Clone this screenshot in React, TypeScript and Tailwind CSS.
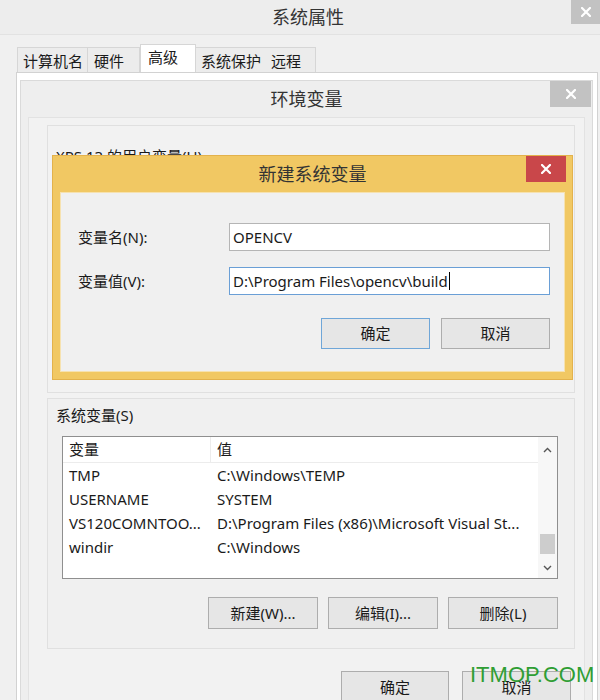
import React from "react";

const font = "font-['Noto_Sans','Noto_Sans_CJK_SC',sans-serif]";

function CloseX({ size = 10 }: { size?: number }) {
  return (
    <svg width={size} height={size} viewBox="0 0 10 10">
      <path d="M1 1L9 9M9 1L1 9" stroke="white" strokeWidth="2.2" strokeLinecap="square" />
    </svg>
  );
}

function Chevron({ up }: { up?: boolean }) {
  return (
    <svg width="9" height="6" viewBox="0 0 9 6">
      <path d={up ? "M1 5L4.5 1.5L8 5" : "M1 1L4.5 4.5L8 1"} stroke="#555" strokeWidth="1.4" fill="none" />
    </svg>
  );
}

function Btn({ label, w, focus }: { label: string; w: string; focus?: boolean }) {
  return (
    <div
      className={`${w} h-full flex items-center justify-center text-[15px] text-[#1a1a1a] bg-[#e6e6e6] border ${
        focus ? "border-[#6fa6d8]" : "border-[#adadad]"
      }`}
    >
      {label}
    </div>
  );
}

const tabs = [
  { name: "计算机名", w: "w-[71px]", pl: "pl-[5px]" },
  { name: "硬件", w: "w-[52px]", pl: "pl-[6px]" },
  { name: "高级", w: "w-[56px]", pl: "pl-[7px]", active: true },
  { name: "系统保护", w: "w-[69px]", pl: "pl-[5px]" },
  { name: "远程", w: "w-[51px]", pl: "pl-[6px]" },
];

const rows = [
  ["TMP", "C:\\Windows\\TEMP"],
  ["USERNAME", "SYSTEM"],
  ["VS120COMNTOO...", "D:\\Program Files (x86)\\Microsoft Visual St..."],
  ["windir", "C:\\Windows"],
];

export default function App() {
  return (
    <div className={`relative w-[600px] h-[700px] overflow-hidden bg-[#f0f0f0] ${font} text-[#1a1a1a]`}>
      {/* 系统属性 title bar */}
      <div className="relative h-[35px] bg-[#ededed] border-b border-[#e2e2e2] flex items-center justify-center pl-[16px] text-[18px] text-[#333]">
        系统属性
        <div className="absolute right-0 top-0 w-[29px] h-[24px] bg-[#c2c2c2] flex items-center justify-center">
          <CloseX />
        </div>
      </div>

      {/* tabs */}
      <div className="h-[37px] flex items-end pl-[17px]">
        {tabs.map((t, i) =>
          t.active ? (
            <div
              key={t.name}
              className={`${t.w} ${t.pl} h-[28px] bg-white border border-b-0 border-[#d6d6d6] text-[15px] leading-[24px]`}
            >
              {t.name}
            </div>
          ) : (
            <div
              key={t.name}
              className={`${t.w} ${t.pl} h-[25px] bg-[#ececec] border border-b-0 border-[#d6d6d6] text-[15px] leading-[26px] ${
                i === 1 || i === 4 ? "border-l-0" : ""
              } ${i === 3 ? "border-l-0 border-r-0" : ""}`}
            >
              {t.name}
            </div>
          )
        )}
      </div>

      {/* tab panel */}
      <div className="ml-[16px] w-[582px] h-[700px] bg-white border-t border-l border-r border-[#d2d2d2] pt-[7px] pl-[3px]">
        {/* 环境变量 window */}
        <div className="relative w-[573px] h-[650px] bg-[#eeeeee] border border-[#dadada]">
          <div className="h-[36px] flex items-center justify-center text-[18px] text-[#333]">环境变量</div>
          <div className="absolute right-[1px] top-0 w-[41px] h-[26px] bg-[#c2c2c2] flex items-center justify-center">
            <CloseX />
          </div>

          <div className="mx-[7px] h-[620px] bg-[#f2f2f2] border border-[#e2e2e2] pt-[7px]">
            {/* user variables group (mostly covered) */}
            <div className="ml-[18px] w-[528px] h-[268px] border border-[#e0e0e0] pt-[20px] pl-[8px] text-[15px] leading-[20px]">
              XPS 13 的用户变量(U)
            </div>

            {/* system variables group */}
            <div className="mt-[5px] ml-[18px] w-[528px] h-[251px] border border-[#e0e0e0] bg-[#f0f0f0] pt-[6px]">
              <div className="pl-[8px] text-[15px] leading-[20px]">系统变量(S)</div>

              <div className="relative mt-[11px] ml-[14px] w-[496px] h-[143px] bg-white border border-[#8f8f8f] flex">
                <div className="flex-1 text-[15px]">
                  <div className="h-[26px] flex items-center border-b border-[#ececec]">
                    <div className="w-[148px] pl-[6px] border-r border-[#ececec] h-full flex items-center">变量</div>
                    <div className="pl-[6px]">值</div>
                  </div>
                  {rows.map(([k, v]) => (
                    <div key={k} className="h-[24px] flex items-center whitespace-nowrap overflow-hidden">
                      <div className="w-[148px] pl-[6px]">{k}</div>
                      <div className="pl-[6px]">{v}</div>
                    </div>
                  ))}
                </div>
                {/* scrollbar */}
                <div className="w-[19px] h-full bg-[#f7f7f7] flex flex-col items-center">
                  <div className="h-[26px] flex items-center">
                    <Chevron up />
                  </div>
                  <div className="flex-1 w-full flex flex-col justify-end">
                    <div className="mx-[2px] h-[20px] bg-[#cdcdcd] mb-[4px]" />
                  </div>
                  <div className="h-[20px] flex items-center">
                    <Chevron />
                  </div>
                </div>
              </div>

              <div className="mt-[18px] ml-[14px] w-[496px] h-[32px] flex justify-end gap-[10px]">
                <Btn label="新建(W)..." w="w-[110px]" />
                <Btn label="编辑(I)..." w="w-[110px]" />
                <Btn label="删除(L)" w="w-[110px]" />
              </div>
            </div>

            <div className="mt-[22px] h-[32px] flex justify-end gap-[13px] pr-[13px]">
              <Btn label="确定" w="w-[108px]" />
              <Btn label="取消" w="w-[109px]" />
            </div>
          </div>
        </div>
      </div>

      {/* 新建系统变量 dialog */}
      <div className="absolute left-[52px] top-[155px] w-[521px] h-[225px] bg-[#f1c863] border border-[#e3b24c]">
        <div className="h-[36px] flex items-center justify-center text-[18px] text-[#333]">新建系统变量</div>
        <div className="absolute right-[6px] top-0 w-[40px] h-[26px] bg-[#c9474a] flex items-center justify-center">
          <CloseX />
        </div>
        <div className="mx-[7px] h-[180px] bg-[#f0f0f0] border border-[#f6e2b0] pl-[17px] pt-[30px]">
          <div className="flex items-center h-[28px]">
            <div className="w-[151px] text-[15px]">变量名(N):</div>
            <div className="w-[321px] h-full bg-white border border-[#b5b5b5] flex items-center pl-[3px] text-[15px]">
              OPENCV
            </div>
          </div>
          <div className="flex items-center h-[28px] mt-[16px]">
            <div className="w-[151px] text-[15px]">变量值(V):</div>
            <div className="w-[321px] h-full bg-white border border-[#6a9fd6] flex items-center pl-[3px] text-[15px]">
              D:\Program Files\opencv\build
              <span className="w-px h-[18px] bg-black ml-px" />
            </div>
          </div>
          <div className="mt-[23px] h-[31px] w-[472px] flex justify-end gap-[11px]">
            <Btn label="确定" w="w-[109px]" focus />
            <Btn label="取消" w="w-[109px]" />
          </div>
        </div>
      </div>

      {/* watermark */}
      <div className="absolute left-[470px] top-[662px] text-[22px] leading-[26px] text-[#2f9e34] font-['Liberation_Sans',sans-serif]">
        ITMOP.COM
      </div>
    </div>
  );
}
